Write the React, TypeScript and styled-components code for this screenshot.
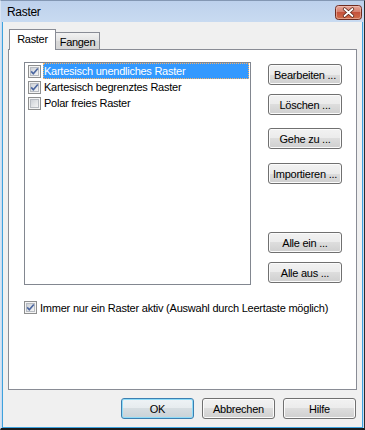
import styled, { createGlobalStyle } from 'styled-components';

const GlobalStyle = createGlobalStyle`
  html, body {
    margin: 0;
    padding: 0;
    background: #fff;
  }
  body {
    font-family: 'Liberation Sans', Arial, sans-serif;
  }
`;

const Window = styled.div`
  width: 365px;
  height: 430px;
  box-sizing: border-box;
  display: flex;
  flex-direction: column;
  background: linear-gradient(#bdd1ec, #c9dbf1 22px, #c9dbf1);
  border-top: 1px solid #8397b3;
  border-right: 1px solid #2b2b2b;
  border-bottom: 2px solid #1b1b1b;
  border-left: 1px solid #d8e4f3;
  font-family: 'Liberation Sans', Arial, sans-serif;
  font-size: 11px;
  color: #000;
`;

const TitleBar = styled.div`
  height: 21px;
  flex-shrink: 0;
  display: flex;
  align-items: center;
  justify-content: space-between;
  padding: 0 2px 0 6px;
`;

const Title = styled.span`
  font-size: 12px;
  letter-spacing: -0.3px;
  margin-top: 1px;
`;

const CloseBox = styled.div`
  width: 27px;
  height: 15px;
  margin-top: 1px;
  display: flex;
`;

const Client = styled.div`
  flex: 1;
  display: flex;
  flex-direction: column;
  margin: 0 1px 0 1px;
  background: #f0f0f0;
  border: 1px solid #3ea2dd;
  border-top: none;
  padding: 7px 5px 0 5px;
  min-height: 0;
`;

const TabRow = styled.div`
  height: 21px;
  display: flex;
  align-items: flex-end;
  padding-left: 1px;
  position: relative;
  z-index: 1;
  flex-shrink: 0;
`;

const Tab = styled.div<{ $active?: boolean }>`
  box-sizing: border-box;
  display: flex;
  align-items: center;
  justify-content: center;
  letter-spacing: -0.3px;
  border: 1px solid #898c95;
  border-bottom: none;
  ${(p) =>
    p.$active
      ? `
    width: 47px;
    height: 21px;
    background: #fff;
    padding-bottom: 2px;
  `
      : `
    width: 44px;
    height: 17px;
    margin-bottom: 1px;
    border-left: none;
    background: linear-gradient(#f2f2f2, #e3e3e3 50%, #d9d9d9 51%, #d5d5d5);
    padding-top: 2px;
  `}
`;

const Panel = styled.div`
  flex: 1;
  margin-top: -1px;
  border: 1px solid #898c95;
  background: #fff;
  padding: 12px 14px 0 15px;
  display: flex;
  flex-direction: column;
  min-height: 0;
`;

const TopArea = styled.div`
  display: flex;
`;

const ListBox = styled.div`
  box-sizing: border-box;
  width: 227px;
  height: 223px;
  border: 1px solid #828790;
  background: #fff;
  padding: 0 1px;
`;

const ListRow = styled.div`
  height: 16px;
  display: flex;
  align-items: center;
  padding-left: 2px;
`;

const ItemLabel = styled.span<{ $selected?: boolean }>`
  flex: 1;
  height: 16px;
  line-height: 16px;
  margin-left: 2px;
  padding-left: 1px;
  letter-spacing: -0.25px;
  white-space: nowrap;
  ${(p) =>
    p.$selected &&
    `
    background: #3399ff;
    color: #fff;
    outline: 1px dotted #f6b26b;
    outline-offset: -1px;
  `}
`;

const ButtonColumn = styled.div`
  display: flex;
  flex-direction: column;
  margin-left: 17px;
  padding-top: 2px;
`;

const Button = styled.button<{ $top?: number; $default?: boolean; $width?: number }>`
  box-sizing: border-box;
  width: ${(p) => p.$width ?? 74}px;
  height: 21px;
  margin-top: ${(p) => p.$top ?? 0}px;
  padding: 0;
  border: 1px solid ${(p) => (p.$default ? '#3c7fb1' : '#707070')};
  border-radius: 3px;
  background: ${(p) =>
    p.$default
      ? 'linear-gradient(#eef3f6 0%, #e6ebee 50%, #d6dde1 50%, #c9d2d7 100%)'
      : 'linear-gradient(#f2f2f2 0%, #ebebeb 50%, #dddddd 50%, #cfcfcf 100%)'};
  box-shadow: inset 0 0 0 1px ${(p) => (p.$default ? '#8fdcf8' : '#fbfbfb')};
  font-family: 'Liberation Sans', Arial, sans-serif;
  font-size: 11px;
  letter-spacing: -0.25px;
  color: #000;
  cursor: default;
`;

const OptionRow = styled.div`
  display: flex;
  align-items: center;
  margin-top: 16px;
  height: 13px;
`;

const OptionLabel = styled.span`
  margin-left: 3px;
  letter-spacing: -0.22px;
  white-space: nowrap;
`;

const ButtonBar = styled.div`
  display: flex;
  justify-content: flex-end;
  gap: 8px;
  padding: 8px 1px 8px 0;
  flex-shrink: 0;
`;

function CheckBox({ checked }: { checked?: boolean }) {
  return (
    <svg width="13" height="13" viewBox="0 0 13 13">
      <defs>
        <linearGradient id="cbIn" x1="0" y1="0" x2="1" y2="1">
          <stop offset="0" stopColor="#cbcfd5" />
          <stop offset="1" stopColor="#f6f6f6" />
        </linearGradient>
      </defs>
      <rect x="0.5" y="0.5" width="12" height="12" fill="#f4f4f4" stroke="#8e8f8f" />
      <rect x="2.5" y="2.5" width="8" height="8" fill="url(#cbIn)" stroke="#b7bbc1" />
      {checked && (
        <path
          d="M3.2 6.4 L5.3 8.8 L9.8 3.4"
          fill="none"
          stroke="#4a66a0"
          strokeWidth="1.6"
          strokeLinejoin="round"
        />
      )}
    </svg>
  );
}

function CloseIcon() {
  return (
    <svg width="27" height="15" viewBox="0 0 27 15">
      <defs>
        <linearGradient id="closeG" x1="0" y1="0" x2="0" y2="1">
          <stop offset="0" stopColor="#e9aa9e" />
          <stop offset="0.45" stopColor="#d5806e" />
          <stop offset="0.5" stopColor="#c5523c" />
          <stop offset="1" stopColor="#d2714c" />
        </linearGradient>
      </defs>
      <rect x="0.5" y="0.5" width="26" height="14" rx="3" fill="url(#closeG)" stroke="#6e2b20" />
      <rect x="1.5" y="1.5" width="24" height="12" rx="2" fill="none" stroke="#f6d0c6" strokeOpacity="0.5" />
      <path d="M9.5 4 L17.5 11 M17.5 4 L9.5 11" stroke="#5a2418" strokeWidth="3.4" strokeLinecap="round" />
      <path d="M9.5 4 L17.5 11 M17.5 4 L9.5 11" stroke="#ffffff" strokeWidth="1.8" strokeLinecap="round" />
    </svg>
  );
}

const items = [
  { label: 'Kartesisch unendliches Raster', checked: true, selected: true },
  { label: 'Kartesisch begrenztes Raster', checked: true, selected: false },
  { label: 'Polar freies Raster', checked: false, selected: false },
];

const sideButtons = [
  { label: 'Bearbeiten ...', top: 0 },
  { label: 'Löschen ...', top: 9 },
  { label: 'Gehe zu ...', top: 13 },
  { label: 'Importieren ...', top: 14 },
  { label: 'Alle ein ...', top: 48 },
  { label: 'Alle aus ...', top: 9 },
];

export default function App() {
  return (
    <>
      <GlobalStyle />
      <Window>
        <TitleBar>
          <Title>Raster</Title>
          <CloseBox>
            <CloseIcon />
          </CloseBox>
        </TitleBar>
        <Client>
          <TabRow>
            <Tab $active>Raster</Tab>
            <Tab>Fangen</Tab>
          </TabRow>
          <Panel>
            <TopArea>
              <ListBox>
                {items.map((it) => (
                  <ListRow key={it.label}>
                    <CheckBox checked={it.checked} />
                    <ItemLabel $selected={it.selected}>{it.label}</ItemLabel>
                  </ListRow>
                ))}
              </ListBox>
              <ButtonColumn>
                {sideButtons.map((b) => (
                  <Button key={b.label} $top={b.top}>
                    {b.label}
                  </Button>
                ))}
              </ButtonColumn>
            </TopArea>
            <OptionRow>
              <CheckBox checked />
              <OptionLabel>Immer nur ein Raster aktiv (Auswahl durch Leertaste möglich)</OptionLabel>
            </OptionRow>
          </Panel>
          <ButtonBar>
            <Button $default $width={73}>
              OK
            </Button>
            <Button $width={73}>Abbrechen</Button>
            <Button $width={73}>Hilfe</Button>
          </ButtonBar>
        </Client>
      </Window>
    </>
  );
}
